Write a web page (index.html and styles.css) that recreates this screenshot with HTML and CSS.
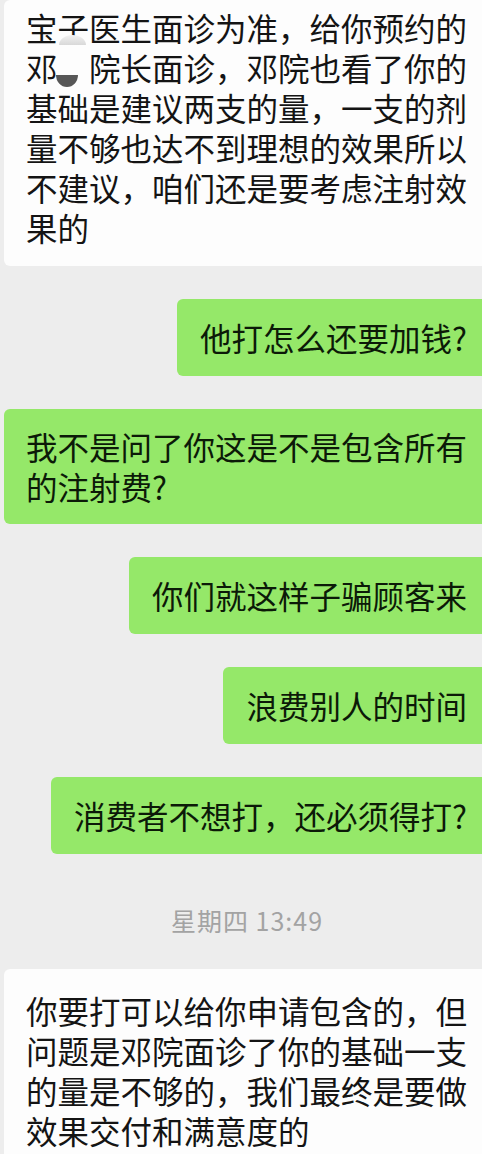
FILE: index.html
```html
<!DOCTYPE html>
<html lang="zh-CN">
<head>
  <meta charset="UTF-8" />
  <title>聊天记录</title>
  <link rel="stylesheet" href="styles.css">
</head>
<body>
  <div class="chat">
    <div class="bubble received first">宝子医生面诊为准，给你预约的邓<span class="redact">　<svg class="redact-mark" width="32" height="54" viewBox="0 0 32 54"><defs><linearGradient id="lightTop" x1="0" y1="0" x2="0" y2="1"><stop offset="0" stop-color="#f2f2f2" /><stop offset="1" stop-color="#d8d8d8" /></linearGradient></defs><path d="M3 10 A13.5 10 0 0 1 30 10 Z" fill="url(#lightTop)" /><path d="M0 40 H22 A11 12 0 0 1 0 40 Z" fill="#575757" /></svg></span>院长面诊，邓院也看了你的基础是建议两支的量，一支的剂量不够也达不到理想的效果所以不建议，咱们还是要考虑注射效果的</div>

    <div class="bubble sent">他打怎么还要加钱?</div>
    <div class="bubble sent">我不是问了你这是不是包含所有的注射费?</div>
    <div class="bubble sent">你们就这样子骗顾客来</div>
    <div class="bubble sent">浪费别人的时间</div>
    <div class="bubble sent">消费者不想打，还必须得打?</div>

    <div class="time">星期四 13:49</div>

    <div class="bubble received last">你要打可以给你申请包含的，但问题是邓院面诊了你的基础一支的量是不够的，我们最终是要做效果交付和满意度的</div>
  </div>
</body>
</html>
```

FILE: styles.css
```css
body {
  margin: 0;
  padding: 0;
  background: #ededed;
  font-family: "Noto Sans CJK SC", "Noto Sans", sans-serif;
  overflow: hidden;
}

.chat {
  display: flex;
  flex-direction: column;
}

.bubble {
  box-sizing: border-box;
  font-size: 31.5px;
  line-height: 40px;
  color: #141414;
  border-radius: 6px 0 0 6px;
}

.received {
  align-self: flex-start;
  width: calc(100% - 4px);
  margin-left: 4px;
  background: #fdfdfd;
  padding: 7px 13px 19px 22px;
}

.received.last {
  padding-top: 21px;
}

.sent {
  align-self: flex-end;
  max-width: calc(100% - 4px);
  background: #95e869;
  color: #0c1a08;
  padding: 18px 15px 19px 23px;
  margin-top: 33px;
}

.sent:nth-child(3) {
  padding-left: 22px;
  padding-right: 13px;
  padding-top: 17px;
  padding-bottom: 18px;
}

.redact {
  position: relative;
}

.redact-mark {
  position: absolute;
  left: -2px;
  top: -9px;
  overflow: visible;
}

.time {
  text-align: center;
  font-size: 25px;
  line-height: 40px;
  letter-spacing: 1px;
  color: #a3a3a3;
  padding-left: 12px;
  margin: 46px 0 29px;
}
```
